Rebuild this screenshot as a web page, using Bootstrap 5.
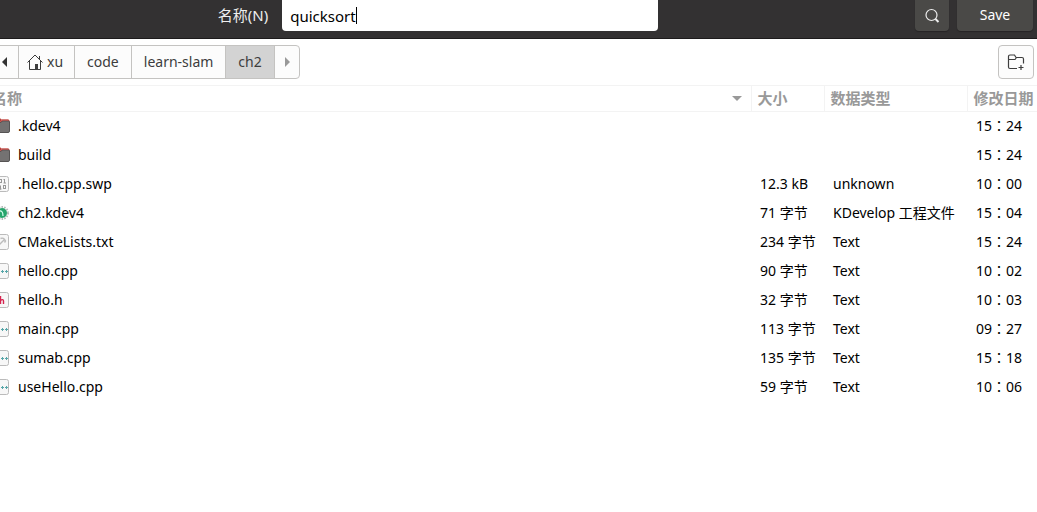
<!DOCTYPE html>
<html lang="zh-CN">
<head>
<meta charset="utf-8">
<meta name="viewport" content="width=device-width, initial-scale=1">
<title>Save file</title>
<link href="https://cdn.jsdelivr.net/npm/bootstrap@5.3.0/dist/css/bootstrap.min.css" rel="stylesheet">
<style>
  body { font: 14px/20px "Noto Sans", "Noto Sans CJK SC", sans-serif; color: #000; background: #fff; overflow-x: hidden; }
  .topbar { background: #333132; border-bottom: 1px solid #1d1b1c; color: #eee; padding: 0 4px 7px 21%; }
  .topbar .field-label { font-size: 15px; line-height: 30px; margin-right: 14px; }
  .topbar .form-control { width: 376px; height: 31px; padding: 0 8px; border: 0; border-radius: 0 0 4px 4px; font-size: 15px; color: #000; box-shadow: none;
    background: linear-gradient(#000, #000) 74px 7px / 1px 17px no-repeat #fff; }
  .topbar .btn { height: 31px; border: 0; border-radius: 0 0 4px 4px; background: #4a4947; color: #fff; font-size: 14px; line-height: 30px; padding: 0 0 1px; box-shadow: 0 1px 1px #262425; }
  .search-btn { width: 34px; }
  .save-btn { width: 76px; }
  .tools { padding: 6px 3px 6px 0; }
  .path .btn, .folder-btn { height: 34px; padding: 0 12px; border: 1px solid #c4c3c1; background: #fcfcfc; color: #3d3d3d; font-size: 14px; line-height: 20px; border-radius: 4px; }
  .path .btn-back { padding: 0 10px 0 0; border-left: 0; border-radius: 0; }
  .path .btn.home { padding: 0 11px 0 8px; }
  .path .btn.active { background: #d3d3d3; border-color: #c4c3c1; color: #3d3d3d; padding: 0 12px; }
  .path .btn-next { padding: 0 8px; }
  .folder-btn.btn { width: 36px; padding: 0; }
  .files { table-layout: fixed; line-height: 20px; }
  .files th { height: 26px; padding: 0 6px 1px; border: 1px solid #f3f3f3; border-left: 0; color: #999; font-weight: 700; font-size: 15px; white-space: nowrap; }
  .files th:last-child { border-right: 0; }
  .files th:first-child { padding-left: 0; padding-right: 9px; }
  .files td { height: 29px; padding: 0 0 0 9px; white-space: nowrap; vertical-align: middle; }
  .files td:first-child { padding: 0; }
  .col-size { width: 73px; } .col-type { width: 143px; } .col-date { width: 70px; }
  .cut-left { margin-left: -8px; }
  .files .time { font-family: "Noto Sans", "Noto Sans CJK TC", sans-serif; }
  .name-cell { gap: 8px; }
</style>
<script src="https://cdn.jsdelivr.net/npm/bootstrap@5.3.0/dist/js/bootstrap.bundle.min.js"></script>
</head>
<body>
<svg class="d-none" aria-hidden="true">
  <symbol id="i-folder" viewBox="6 0 10 16">
    <path d="M0 .5h6.500l1 1H14a1.500 1.500 0 0 1 1.500 1.500V8H0z" fill="#b8403c"/>
    <path d="M0 4.500h7l1.500-1.500H14.500q1 0 1 1v9a1.500 1.500 0 0 1-1.500 1.500H0z" fill="#747272" stroke="#565454"/>
    <path d="M0 3.500h6.500l1.500-1.500h6.500" stroke="#d0605a" fill="none"/>
  </symbol>
  <symbol id="i-bin" viewBox="6 0 10 16">
    <rect x=".5" y=".5" width="14" height="15" rx="2" fill="#f8f8f8" stroke="#bbb"/>
    <path d="M10.500 3v4M9.500 3.500h1M9.500 7h2.500M6.500 9.500v4M5.500 13h2" stroke="#999" fill="none"/>
    <rect x="5.500" y="3.500" width="2" height="3" stroke="#999" fill="none"/>
    <rect x="9.500" y="9.500" width="2" height="3" stroke="#999" fill="none"/>
  </symbol>
  <symbol id="i-kdev" viewBox="6 0 10 16">
    <circle cx="8" cy="8" r="6" fill="none" stroke="#b4bab8" stroke-width="2" stroke-dasharray="1.500 1.200"/>
    <circle cx="8" cy="8" r="5" fill="#27a56c"/>
    <path d="M5 6q4-1 4 5" stroke="#d8fff0" fill="none" stroke-width="1.200"/>
  </symbol>
  <symbol id="i-make" viewBox="6 0 10 16">
    <rect x=".5" y=".5" width="14" height="15" rx="2" fill="#f7f7f7" stroke="#bbb"/>
    <path d="M4 12l6-6M6.500 4.500q3-1.500 5 2.500l-1 1.500" stroke="#bbb" stroke-width="1.400" fill="none"/>
  </symbol>
  <symbol id="i-cpp" viewBox="6 0 10 16">
    <rect x=".5" y=".5" width="14" height="15" rx="2" fill="#f7f7f7" stroke="#bbb"/>
    <path d="M7 8.500h3M8.500 7v3M11 8.500h3M12.500 7v3" stroke="#57a6a8"/>
  </symbol>
  <symbol id="i-h" viewBox="6 0 10 16">
    <rect x=".5" y=".5" width="14" height="15" rx="2" fill="#f7f7f7" stroke="#bbb"/>
    <path d="M6.500 4v8M6.500 8.500q3-2 3 .5V12" stroke="#d5254f" stroke-width="1.400" fill="none"/>
  </symbol>
</svg>

<header class="topbar d-flex align-items-start">
  <label for="filename" class="text-nowrap field-label">名称(N)</label>
  <input id="filename" class="form-control" type="text" value="quicksort">
  <div class="d-flex gap-2 ms-auto">
    <button class="btn search-btn" type="button" aria-label="Search">
      <svg width="16" height="16" viewBox="0 0 16 16" fill="none" stroke="#eee" stroke-width="1.200"><circle cx="7.500" cy="7" r="5.500"/><path d="M11.500 11l3 3" stroke-width="2"/></svg>
    </button>
    <button class="btn save-btn" type="button">Save</button>
  </div>
</header>

<main>
  <div class="tools d-flex justify-content-between">
    <nav class="path btn-group" aria-label="Path">
      <button class="btn btn-back" type="button" aria-label="Back"><svg class="d-block" width="8" height="10" viewBox="0 0 8 10"><path d="M7 0v10L2 5z" fill="#333"/></svg></button>
      <button class="btn home d-flex align-items-center gap-1" type="button"><svg width="16" height="16" viewBox="0 0 16 16" fill="none" stroke="#3d3d3d"><path d="M.5 8.500L8 1l7.500 7.500M2.500 7v8.500h11V7M12.500 2v3"/><path d="M8 10h3v5H8z" fill="#3d3d3d" stroke="none"/></svg>xu</button>
      <button class="btn" type="button">code</button>
      <button class="btn" type="button">learn-slam</button>
      <button class="btn active" type="button">ch2</button>
      <button class="btn btn-next" type="button" aria-label="Forward"><svg class="d-block" width="8" height="10" viewBox="0 0 8 10"><path d="M2 0v10l5-5z" fill="#999"/></svg></button>
    </nav>
    <button class="btn folder-btn" type="button" aria-label="New folder">
      <svg class="d-block mx-auto" width="18" height="16" viewBox="0 0 18 16" fill="none" stroke="#3d3d3d" stroke-width="1.200"><path d="M10 14.500H3A1.500 1.500 0 0 1 1.500 13V2.500A1.500 1.500 0 0 1 3 1h4.500L9 3.500h6A1.500 1.500 0 0 1 16.500 5v4.500M1.500 5.500H8l1.500-2M11.500 13.500h5M14 11v5"/></svg>
    </button>
  </div>

  <table class="files w-100">
    <colgroup><col><col class="col-size"><col class="col-type"><col class="col-date"></colgroup>
    <thead>
      <tr>
        <th scope="col"><div class="d-flex justify-content-between align-items-center"><span class="cut-left">名称</span><svg width="10" height="5" viewBox="0 0 10 5"><path d="M0 0h10L5 5z" fill="#999"/></svg></div></th>
        <th scope="col">大小</th><th scope="col">数据类型</th><th scope="col">修改日期</th>
      </tr>
    </thead>
    <tbody>
      <tr><td><div class="name-cell d-flex align-items-center"><svg width="10" height="16"><use href="#i-folder"/></svg>.kdev4</div></td><td></td><td></td><td class="time">15：24</td></tr>
      <tr><td><div class="name-cell d-flex align-items-center"><svg width="10" height="16"><use href="#i-folder"/></svg>build</div></td><td></td><td></td><td class="time">15：24</td></tr>
      <tr><td><div class="name-cell d-flex align-items-center"><svg width="10" height="16"><use href="#i-bin"/></svg>.hello.cpp.swp</div></td><td>12.3 kB</td><td>unknown</td><td class="time">10：00</td></tr>
      <tr><td><div class="name-cell d-flex align-items-center"><svg width="10" height="16"><use href="#i-kdev"/></svg>ch2.kdev4</div></td><td>71 字节</td><td>KDevelop 工程文件</td><td class="time">15：04</td></tr>
      <tr><td><div class="name-cell d-flex align-items-center"><svg width="10" height="16"><use href="#i-make"/></svg>CMakeLists.txt</div></td><td>234 字节</td><td>Text</td><td class="time">15：24</td></tr>
      <tr><td><div class="name-cell d-flex align-items-center"><svg width="10" height="16"><use href="#i-cpp"/></svg>hello.cpp</div></td><td>90 字节</td><td>Text</td><td class="time">10：02</td></tr>
      <tr><td><div class="name-cell d-flex align-items-center"><svg width="10" height="16"><use href="#i-h"/></svg>hello.h</div></td><td>32 字节</td><td>Text</td><td class="time">10：03</td></tr>
      <tr><td><div class="name-cell d-flex align-items-center"><svg width="10" height="16"><use href="#i-cpp"/></svg>main.cpp</div></td><td>113 字节</td><td>Text</td><td class="time">09：27</td></tr>
      <tr><td><div class="name-cell d-flex align-items-center"><svg width="10" height="16"><use href="#i-cpp"/></svg>sumab.cpp</div></td><td>135 字节</td><td>Text</td><td class="time">15：18</td></tr>
      <tr><td><div class="name-cell d-flex align-items-center"><svg width="10" height="16"><use href="#i-cpp"/></svg>useHello.cpp</div></td><td>59 字节</td><td>Text</td><td class="time">10：06</td></tr>
    </tbody>
  </table>
</main>
</body>
</html>
